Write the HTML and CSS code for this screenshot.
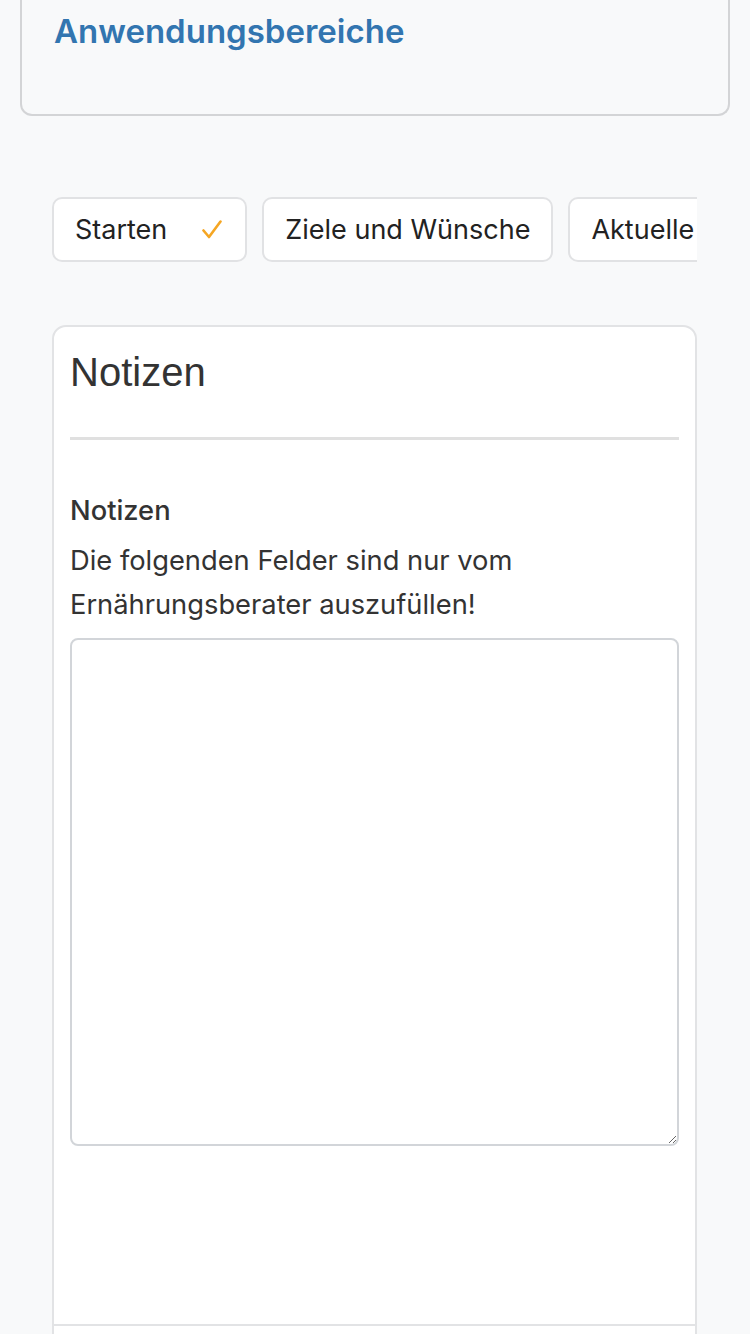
FILE: index.html
```html
<!DOCTYPE html>
<html lang="de">
<head>
<meta charset="utf-8">
<title>Notizen</title>
<link rel="stylesheet" href="styles.css">
</head>
<body>
<div class="page">
  <section class="area-card">
    <h2 class="area-title">Anwendungsbereiche</h2>
  </section>

  <nav class="steps">
    <div class="steps-track">
      <button class="step done">Starten
        <svg class="check" width="20" height="20" viewBox="0 0 20 20" aria-hidden="true">
          <path d="M1.5 10.5 L7 17 L18.5 1.5" fill="none" stroke="#f5a623" stroke-width="2.6" stroke-linecap="round" stroke-linejoin="round"/>
        </svg>
      </button>
      <button class="step">Ziele und Wünsche</button>
      <button class="step">Aktuelle Situation</button>
    </div>
  </nav>

  <section class="panel">
    <h1 class="panel-title">Notizen</h1>
    <hr class="panel-rule">
    <label class="field-label" for="notes">Notizen</label>
    <p class="field-hint">Die folgenden Felder sind nur vom Ernährungsberater auszufüllen!</p>
    <textarea id="notes" class="notes"></textarea>
    <div class="panel-footer"></div>
  </section>
</div>
</body>
</html>
```

FILE: styles.css
```css
html, body {
  margin: 0;
  padding: 0;
  background: #f8f9fa;
}

body {
  font-family: Inter, "Noto Sans", sans-serif;
  color: #333;
  overflow: hidden;
  height: 1334px;
}

.page {
  padding: 0 20px;
}

/* previous section, scrolled mostly out of view */
.area-card {
  margin-top: -20px;
  height: 136px;
  border: 2px solid #d3d4d6;
  border-top: none;
  border-radius: 0 0 12px 12px;
  padding: 0 32px;
  box-sizing: border-box;
  width: 710px;
}

.area-title {
  margin: 0;
  padding-top: 30px;
  font-family: Inter, sans-serif;
  font-weight: 600;
  font-size: 33px;
  line-height: 42px;
  color: #3275b0;
}

.steps {
  margin: 81px 0 0 32px;
  width: 645px;
  overflow: hidden;
}

.steps-track {
  display: flex;
  gap: 15px;
  white-space: nowrap;
}

.step {
  flex: none;
  display: flex;
  align-items: center;
  height: 65px;
  padding: 0 21px;
  background: #fff;
  border: 2px solid #e1e2e4;
  border-radius: 10px;
  font-family: Inter, sans-serif;
  font-size: 27px;
  color: #222;
}

.step .check {
  margin-left: 35px;
  margin-right: 2px;
}

/* notes panel */
.panel {
  margin: 63px 0 0 32px;
  width: 645px;
  box-sizing: border-box;
  background: #fff;
  border: 2px solid #e2e3e5;
  border-radius: 14px;
  padding: 0 16px;
  height: 1100px;
}

.panel-title {
  margin: 0;
  padding-top: 22px;
  font-family: "Liberation Sans", Arial, sans-serif;
  font-weight: 400;
  font-size: 40px;
  line-height: 46px;
  color: #333;
}

.panel-rule {
  margin: 42px 0 0;
  border: none;
  height: 3px;
  background: #e0e0e0;
}

.field-label {
  display: block;
  margin-top: 55px;
  font-size: 27.3px;
  font-weight: 500;
  line-height: 32px;
  color: #333;
}

.field-hint {
  margin: 12px 0 0;
  font-size: 27.3px;
  line-height: 44px;
  color: #333;
}

.notes {
  display: block;
  margin-top: 11px;
  width: 100%;
  height: 508px;
  box-sizing: border-box;
  border: 2px solid #d2d5d9;
  border-radius: 8px;
  resize: vertical;
  background: #fff;
}

.panel-footer {
  margin: 178px -16px 0;
  height: 2px;
  background: #e2e3e5;
}
```
